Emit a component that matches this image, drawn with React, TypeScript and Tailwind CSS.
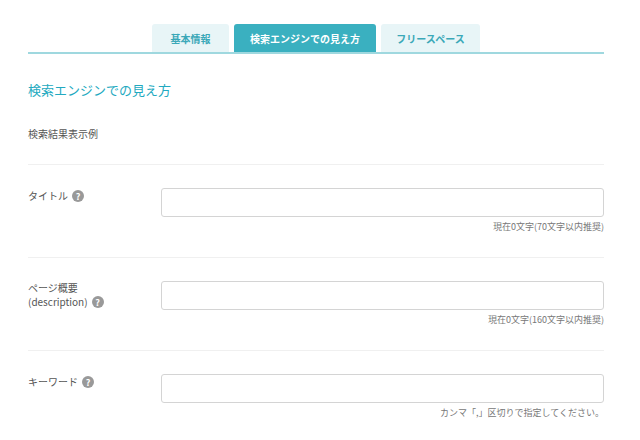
const Q = () => (
  <span className="inline-flex items-center justify-center w-[12px] h-[12px] rounded-full bg-[#999] text-white text-[9px] font-bold ml-[4px] leading-none">?</span>
);

function Row({ label, hint, pt }: { label: React.ReactNode; hint: string; pt: string }) {
  return (
    <div className="border-t border-[#f0f0f0] flex pt-[23px] pb-[24px]">
      <div className={`w-[133px] text-[10px] text-[#555] leading-[14px] ${pt}`}>{label}</div>
      <div className="flex-1">
        <div className="h-[29px] border border-[#d4d4d4] rounded-[3px] bg-white" />
        <div className="text-right text-[9px] text-[#777] mt-[4px] leading-[12px]">{hint}</div>
      </div>
    </div>
  );
}

export default function App() {
  return (
    <div className="w-[640px] h-[440px] bg-white overflow-hidden pl-[28px] pr-[36px] pt-[24px]" style={{ fontFamily: '"Noto Sans CJK JP", "Noto Sans", sans-serif' }}>
      <div className="flex justify-center gap-[5px] border-b-2 border-[#9fd8df]">
        <div className="w-[77px] h-[28px] bg-[#e8f5f7] rounded-t-[3px] flex items-center justify-center text-[10px] font-bold text-[#3aa8b8]">基本情報</div>
        <div className="w-[142px] h-[28px] bg-[#3ab0c0] rounded-t-[3px] flex items-center justify-center text-[10px] font-bold text-white">検索エンジンでの見え方</div>
        <div className="w-[99px] h-[28px] bg-[#e8f5f7] rounded-t-[3px] flex items-center justify-center text-[10px] font-bold text-[#3aa8b8]">フリースペース</div>
      </div>
      <div className="text-[13px] text-[#22a9c0] mt-[27px] leading-[18px]">検索エンジンでの見え方</div>
      <div className="text-[10px] text-[#555] mt-[28px] leading-[14px] pb-[23px]">検索結果表示例</div>
      <Row pt="pt-[1px]" label={<span className="inline-flex items-center">タイトル<Q /></span>} hint="現在0文字(70文字以内推奨)" />
      <Row pt="pt-[0px]" label={<><div>ページ概要</div><div className="inline-flex items-center">(description)<Q /></div></>} hint="現在0文字(160文字以内推奨)" />
      <Row pt="pt-[1px]" label={<span className="inline-flex items-center">キーワード<Q /></span>} hint="カンマ「,」区切りで指定してください。" />
    </div>
  );
}
